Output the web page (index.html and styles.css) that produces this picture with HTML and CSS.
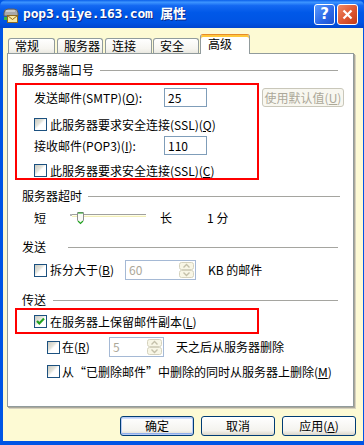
FILE: index.html
```html
<!DOCTYPE html>
<html lang="zh-CN">
<head>
    <meta charset="UTF-8">
    <title>pop3.qiye.163.com 属性</title>
    <link rel="stylesheet" href="styles.css">
</head>
<body>

<div class="window">
    <!-- Заголовок окна -->
    <div class="titlebar">
        <svg class="app-icon" width="16" height="16" viewBox="0 0 16 16">
            <path d="M1 6 Q1 2 5 2 L11 2 Q15 2 15 6 L15 9 L1 9 Z" fill="#A9A9A9" stroke="#5E5E5E"/>
            <path d="M3 4 L12 4" stroke="#E2E2E2" stroke-width="1.2"/>
            <rect x="4.5" y="8.5" width="10" height="7" fill="#F8E7A0" stroke="#8C6A22"/>
            <path d="M4.5 8.5 L9.5 12.5 L14.5 8.5" fill="none" stroke="#8C6A22"/>
            <rect x="1" y="10" width="3" height="3" fill="#39B54A"/>
        </svg>
        <span class="title">pop3.qiye.163.com 属性</span>
        <div class="caption-btns">
            <span class="cap-btn cap-help">?</span>
            <span class="cap-btn cap-close">
                <svg width="11" height="11" viewBox="0 0 11 11"><path d="M1.5 1.5 L9.5 9.5 M9.5 1.5 L1.5 9.5" stroke="#fff" stroke-width="2.2"/></svg>
            </span>
        </div>
    </div>

    <div class="frame">
        <div class="client">
            <div class="tabs">
                <span class="tab tab-w1">常规</span>
                <span class="tab tab-w2">服务器</span>
                <span class="tab tab-w3">连接</span>
                <span class="tab tab-w4">安全</span>
                <span class="tab tab-active">高级</span>
            </div>

            <div class="panel">
                <div class="group"><span>服务器端口号</span><i class="rule rule-1"></i></div>

                <div class="row row-port row-smtp">
                    <span class="lbl">发送邮件(SMTP)(<u>O</u>):</span>
                    <span class="field">25</span>
                    <span class="btn-off">使用默认值(<u>U</u>)</span>
                </div>
                <div class="row row-chk row-ssl1">
                    <span class="check"></span>
                    <span>此服务器要求安全连接(SSL)(<u>Q</u>)</span>
                </div>
                <div class="row row-port row-pop3">
                    <span class="lbl">接收邮件(POP3)(<u>I</u>):</span>
                    <span class="field">110</span>
                </div>
                <div class="row row-chk row-ssl2">
                    <span class="check"></span>
                    <span>此服务器要求安全连接(SSL)(<u>C</u>)</span>
                </div>

                <div class="group group-timeout"><span>服务器超时</span><i class="rule rule-2"></i></div>
                <div class="row row-slider">
                    <span>短</span>
                    <svg class="slider" width="80" height="15" viewBox="0 0 80 15">
                        <rect x="0" y="4" width="2" height="2" fill="#B5B5B5"/>
                        <path d="M2 4.5 L76 4.5" stroke="#A0A0A0"/>
                        <path d="M2 5.5 L76 5.5" stroke="#FFFFE6"/>
                        <path d="M2 6.5 L76 6.5" stroke="#F2EEB8"/>
                        <path d="M7.5 2.5 L13.5 2.5 L13.5 10.5 L10.5 13.5 L7.5 10.5 Z" fill="#FAFAF6" stroke="#8E8E8E"/>
                        <path d="M8 11 L10.5 13.5 L13 11" fill="none" stroke="#21A121" stroke-width="1.2"/>
                        <path d="M8 3 L13 3" stroke="#21A121"/>
                    </svg>
                    <span class="long">长</span>
                    <span class="minutes">1 分</span>
                </div>

                <div class="group group-send"><span>发送</span><i class="rule rule-3"></i></div>
                <div class="row row-split">
                    <span class="check"></span>
                    <span class="split-lbl">拆分大于(<u>B</u>)</span>
                    <span class="spin spin-split">
                        <span class="spin-num">60</span>
                        <svg width="15" height="16" viewBox="0 0 15 16">
                            <rect x="0.5" y="0.5" width="14" height="7" rx="2" fill="#F8F6E6" stroke="#D5D2BE"/>
                            <rect x="0.5" y="8.5" width="14" height="7" rx="2" fill="#F8F6E6" stroke="#D5D2BE"/>
                            <path d="M4.5 5.5 L7.5 2.5 L10.5 5.5" fill="none" stroke="#C4C0AA" stroke-width="1.4"/>
                            <path d="M4.5 10.5 L7.5 13.5 L10.5 10.5" fill="none" stroke="#C4C0AA" stroke-width="1.4"/>
                        </svg>
                    </span>
                    <span class="kb">KB 的邮件</span>
                </div>

                <div class="group group-deliver"><span>传送</span><i class="rule rule-4"></i></div>
                <div class="row row-chk row-keep">
                    <span class="check check-on">
                        <svg width="11" height="11" viewBox="0 0 11 11"><path d="M2 5 L4.3 7.5 L9 2.5" fill="none" stroke="#21A121" stroke-width="2.2"/></svg>
                    </span>
                    <span>在服务器上保留邮件副本(<u>L</u>)</span>
                </div>
                <div class="row row-days">
                    <span class="check"></span>
                    <span class="days-lbl">在(<u>R</u>)</span>
                    <span class="spin spin-days">
                        <span class="spin-num">5</span>
                        <svg width="15" height="16" viewBox="0 0 15 16">
                            <rect x="0.5" y="0.5" width="14" height="7" rx="2" fill="#F8F6E6" stroke="#D5D2BE"/>
                            <rect x="0.5" y="8.5" width="14" height="7" rx="2" fill="#F8F6E6" stroke="#D5D2BE"/>
                            <path d="M4.5 5.5 L7.5 2.5 L10.5 5.5" fill="none" stroke="#C4C0AA" stroke-width="1.4"/>
                            <path d="M4.5 10.5 L7.5 13.5 L10.5 10.5" fill="none" stroke="#C4C0AA" stroke-width="1.4"/>
                        </svg>
                    </span>
                    <span class="days-txt">天之后从服务器删除</span>
                </div>
                <div class="row row-chk row-sub row-delete">
                    <span class="check"></span>
                    <span>从“已删除邮件”中删除的同时从服务器上删除(<u>M</u>)</span>
                </div>

                <!-- Красные рамки-пометки поверх содержимого -->
                <div class="mark mark-ports"></div>
                <div class="mark mark-keep"></div>
            </div>

            <div class="buttons">
                <span class="btn btn-default">确定</span>
                <span class="btn">取消</span>
                <span class="btn">应用(<u>A</u>)</span>
            </div>
        </div>
    </div>
</div>

</body>
</html>
```

FILE: styles.css
```css
* {
    box-sizing: border-box;
}

body {
    margin: 0;
    font-family: "Noto Sans CJK SC", "Noto Sans", sans-serif;
    font-size: 12px;
    line-height: 14px;
    color: #000;
    background: #fff;
}

u {
    text-decoration: underline;
    text-underline-offset: 1px;
}

/* Окно */
.window {
    width: 364px;
    height: 445px;
    display: flex;
    flex-direction: column;
    background: #0055E5;
}

.titlebar {
    height: 28px;
    display: flex;
    align-items: center;
    padding-left: 3px;
    background: linear-gradient(to bottom, #0A5FEA 0%, #3D95FF 8%, #1469F2 20%, #0058E8 45%, #0054E3 80%, #0046CF 100%);
    border-radius: 6px 6px 0 0;
}

.app-icon {
    flex-shrink: 0;
    margin-top: 2px;
}

.title {
    margin-left: 4px;
    font-family: "DejaVu Sans Mono", "Noto Sans CJK SC", monospace;
    font-weight: bold;
    font-size: 13px;
    color: #fff;
    text-shadow: 1px 1px 0 #0A2A8A;
    letter-spacing: -0.2px;
}

.caption-btns {
    margin-left: auto;
    margin-right: 6px;
    display: flex;
    gap: 2px;
}

.cap-btn {
    width: 21px;
    height: 21px;
    border: 1px solid #fff;
    border-radius: 3px;
    display: flex;
    align-items: center;
    justify-content: center;
}

.cap-help {
    background: linear-gradient(135deg, #5A9BFF, #2A66E6 60%, #1E52CF);
    color: #fff;
    font-family: "DejaVu Sans", sans-serif;
    font-weight: bold;
    font-size: 15px;
}

.cap-close {
    background: linear-gradient(135deg, #F08A66, #DD5631 55%, #C23B16);
}

.frame {
    flex: 1;
    padding: 0 4px 4px 3px;
    display: flex;
}

.client {
    flex: 1;
    background: #FDFAD4;
    padding: 6px 0 0 4px;
}

/* Вкладки */
.tabs {
    height: 19px;
    display: flex;
    align-items: flex-end;
    padding-left: 1px;
}

.tab {
    height: 15px;
    border: 1px solid #919B9C;
    border-bottom: none;
    border-radius: 3px 3px 0 0;
    background: linear-gradient(to bottom, #FFFFFF, #F6F5F0 70%, #E9E8E0);
    padding-left: 6px;
    line-height: 14px;
    margin-right: 2px;
}

.tab-w1 { width: 47px; }
.tab-w2 { width: 46px; }
.tab-w3 { width: 47px; margin-right: 1px; }
.tab-w4 { width: 46px; margin-right: 1px; }

.tab-active {
    position: relative;
    z-index: 1;
    width: 50px;
    height: 20px;
    margin-bottom: -1px;
    background: #fff;
    border-top: 1px solid #E68B2C;
    box-shadow: inset 0 2px 0 #FFC83C;
    padding-left: 7px;
    padding-top: 2px;
}

/* Панель */
.panel {
    position: relative;
    width: 347px;
    height: 354px;
    background: #fff;
    border: 1px solid #919B9C;
    box-shadow: 1px 1px 0 #ACA899, 2px 2px 0 #D6D3C0;
}

.group {
    height: 14px;
    margin-top: 9px;
    padding-left: 14px;
    display: flex;
    align-items: center;
}

.group-timeout { margin-top: 11px; }
.group-send { margin-top: 15px; }
.group-deliver { margin-top: 13px; }

.rule {
    flex: 1;
    height: 1px;
    background: #A5A5A0;
    margin-right: 15px;
    margin-top: 1px;
}

.rule-1 { margin-left: 6px; }
.rule-2 { margin-left: 6px; margin-right: 13px; }
.rule-3 { margin-left: 22px; }
.rule-4 { margin-left: 7px; }

.row {
    display: flex;
    align-items: center;
    padding-left: 26px;
}

.row-port { height: 19px; }
.row-smtp { margin-top: 11px; }
.row-pop3 { margin-top: 4px; }

.row-chk {
    height: 15px;
    gap: 3px;
}

.row-ssl1 { margin-top: 10px; }
.row-ssl2 { margin-top: 8px; }

.lbl {
    width: 130px;
}

.field {
    width: 43px;
    height: 19px;
    border: 1px solid #7F9DB9;
    padding-left: 3px;
    line-height: 17px;
}

.btn-off {
    margin-left: 55px;
    width: 82px;
    height: 19px;
    border: 1px solid #C9C7BA;
    border-radius: 3px;
    background: #F8F7F0;
    color: #ACA899;
    text-align: center;
    line-height: 17px;
}

.check {
    flex-shrink: 0;
    width: 13px;
    height: 13px;
    border: 1px solid #1C5180;
    background: linear-gradient(135deg, #C9C9C0 0%, #E4E4DC 38%, #FFFFFF 52%);
    display: flex;
    align-items: center;
    justify-content: center;
}

/* Ползунок */
.row-slider {
    height: 15px;
    margin-top: 7px;
}

.slider {
    margin-left: 24px;
}

.long {
    margin-left: 10px;
}

.minutes {
    margin-left: 35px;
}

/* Разбиение */
.row-split {
    height: 20px;
    margin-top: 6px;
    gap: 3px;
}

.split-lbl {
    width: 72px;
}

.spin {
    height: 20px;
    display: flex;
    align-items: center;
    border: 1px solid #A5B9D5;
    padding: 0 1px 0 3px;
    color: #ACA899;
}

.spin-num {
    flex: 1;
}

.spin-split { width: 71px; }
.kb { margin-left: 9px; }

.row-keep {
    margin-top: 7px;
}

.row-days {
    height: 20px;
    margin-top: 8px;
    padding-left: 39px;
    gap: 2px;
}

.days-lbl { width: 45px; }
.spin-days { width: 55px; }
.days-txt { margin-left: 10px; }

.row-sub {
    padding-left: 39px;
    gap: 2px;
}

.row-delete {
    margin-top: 7px;
}

/* Красные рамки */
.mark {
    position: absolute;
    border: 2px solid #FF0000;
    pointer-events: none;
}

.mark-ports {
    left: 7px;
    top: 29px;
    width: 244px;
    height: 97px;
}

.mark-keep {
    left: 7px;
    top: 254px;
    width: 244px;
    height: 26px;
}

/* Кнопки внизу */
.buttons {
    margin-top: 9px;
    display: flex;
    padding-left: 113px;
}

.btn {
    width: 74px;
    height: 20px;
    border: 1px solid #003C74;
    border-radius: 3px;
    background: linear-gradient(to bottom, #FFFFFF, #F4F3EE 75%, #DCD7CB);
    text-align: center;
    line-height: 18px;
    margin-right: 7px;
}

.btn-default {
    box-shadow: inset 0 0 0 1px #B9CBF5, inset 0 2px 0 #CFDDFC, inset 0 -2px 0 #8FAEEC;
}
```
